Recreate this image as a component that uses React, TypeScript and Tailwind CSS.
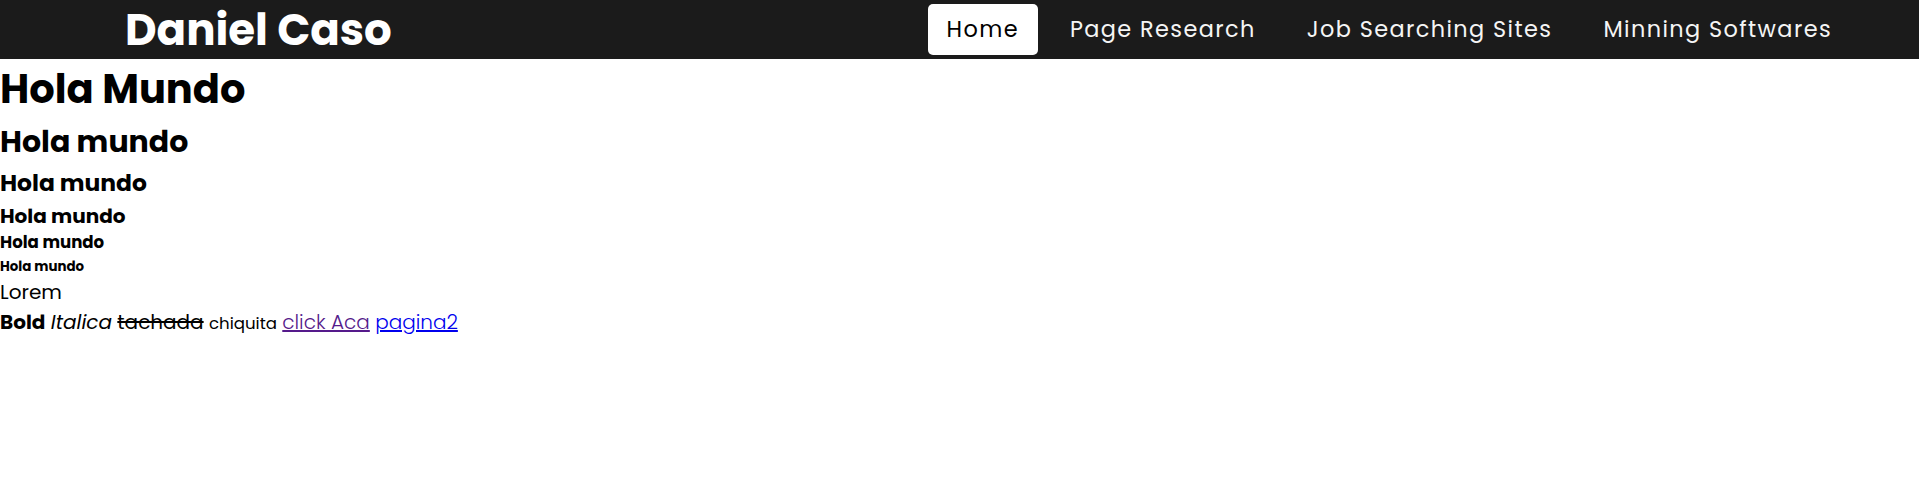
import React from "react";

const font = "font-['Poppins','DejaVu_Sans',sans-serif]";

export default function App() {
  return (
    <div className={`${font} min-h-screen bg-white text-black`}>
      <header className="flex h-[59px] items-center justify-between bg-[#1b1b1b] pl-[125px] pr-[68px]">
        <div className="text-[43.5px] font-bold leading-none text-white">Daniel Caso</div>
        <nav className="flex items-center gap-[13px] text-[22.4px] leading-[1.5] tracking-[1.4px]">
          <a className="rounded-[5px] bg-white px-[19px] py-[9px] text-black">Home</a>
          <a className="px-[19px] py-[9px] text-[#f5f5f5]">Page Research</a>
          <a className="px-[19px] py-[9px] text-[#f5f5f5]">Job Searching Sites</a>
          <a className="px-[19px] py-[9px] text-[#f5f5f5]">Minning Softwares</a>
        </nav>
      </header>
      <main className="text-[20px] leading-[1.5]">
        <h1 className="text-[40px] font-bold">Hola Mundo</h1>
        <h2 className="text-[30px] font-bold leading-[46px]">Hola mundo</h2>
        <h3 className="text-[23.4px] font-bold leading-[36px]">Hola mundo</h3>
        <h4 className="text-[20px] font-bold">Hola mundo</h4>
        <h5 className="text-[16.6px] font-bold">Hola mundo</h5>
        <h6 className="text-[13.4px] font-bold leading-[21px]">Hola mundo</h6>
        <p>Lorem</p>
        <p>
          <b className="font-bold">Bold</b>{" "}
          <i className="italic">Italica</i>{" "}
          <s className="line-through">tachada</s>{" "}
          <small className="text-[16.6px]">chiquita</small>{" "}
          <a className="font-light text-[#551a8b] underline">click Aca</a>{" "}
          <a className="font-light text-[#0000ee] underline">pagina2</a>
        </p>
      </main>
    </div>
  );
}
